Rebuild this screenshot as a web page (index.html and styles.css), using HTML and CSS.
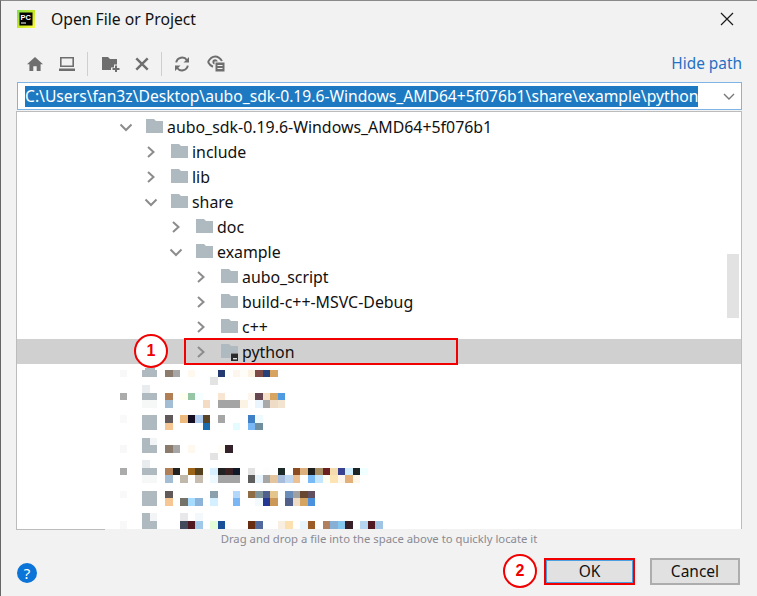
FILE: index.html
```html
<!DOCTYPE html>
<html lang="en">
<head>
<meta charset="utf-8">
<title>Open File or Project</title>
<link rel="stylesheet" href="styles.css">
</head>
<body>
<div class="dialog">
  <header class="titlebar">
    <svg class="logo" width="18" height="18" viewBox="0 0 18 18">
      <defs><linearGradient id="lg" x1="0" y1="0" x2="1" y2="1"><stop offset="0" stop-color="#7ee050"/><stop offset="0.5" stop-color="#c4e620"/><stop offset="1" stop-color="#fcf84a"/></linearGradient></defs>
      <rect width="18" height="18" fill="url(#lg)"/>
      <rect x="2.5" y="2.5" width="13" height="13" fill="#000"/>
      <text x="3.5" y="9.5" class="logo-text">PC</text>
      <rect x="4" y="12.5" width="5" height="1" fill="#fff"/>
    </svg>
    <span class="title">Open File or Project</span>
    <svg class="close" width="14" height="14" viewBox="0 0 14 14"><path d="M1 1L13 13M13 1L1 13" stroke="#1a1a1a" stroke-width="1.2" fill="none"/></svg>
  </header>

  <div class="toolbar">
    <div class="tools">
      <svg class="tool tool-home" width="16" height="14" viewBox="0 0 16 14"><path d="M8 0L16 7.2H13.6V14H9.7V9.3H6.3V14H2.4V7.2H0Z" fill="#6e6e6e"/></svg>
      <svg class="tool tool-pc" width="16" height="14" viewBox="0 0 16 14"><path d="M1 0H15V10H1ZM2.6 1.6V8.4H13.4V1.6ZM0 11.6H16V14H0Z" fill="#6e6e6e" fill-rule="evenodd"/></svg>
      <span class="sep"></span>
      <svg class="tool tool-new" width="18" height="16" viewBox="0 0 18 16"><path d="M0 1H6L8 3H15V8.5H12V11.5H9V14H0Z" fill="#6e6e6e"/><path d="M13 9.5H15V12H17.5V14H15V16H13V14H10.5V12H13Z" fill="#6e6e6e"/></svg>
      <svg class="tool tool-del" width="14" height="14" viewBox="0 0 14 14"><path d="M1.3 1.3L12.7 12.7M12.7 1.3L1.3 12.7" stroke="#6e6e6e" stroke-width="2.4" fill="none"/></svg>
      <span class="sep"></span>
      <svg class="tool tool-ref" width="16" height="16" viewBox="0 0 16 16"><path d="M2.2 6.4A6 6 0 0 1 13 4.2M13.8 9.6A6 6 0 0 1 3 11.8" stroke="#6e6e6e" stroke-width="2" fill="none"/><path d="M15 1V6.5H9.5ZM1 15V9.5H6.5Z" fill="#6e6e6e"/></svg>
      <svg class="tool tool-eye" width="18" height="17" viewBox="0 0 18 17"><path d="M1 7C3 3.2 5.6 1.4 8.2 1.4S13 3 15 6" stroke="#6e6e6e" stroke-width="2" fill="none"/><path d="M1 7C2.4 9.6 4 11 6 11.8" stroke="#6e6e6e" stroke-width="2" fill="none"/><circle cx="8" cy="6.8" r="2.6" fill="#6e6e6e"/><rect x="8" y="7" width="10" height="10" fill="#6e6e6e" stroke="#f2f2f2"/><path d="M10.5 10.5H15.5M10.5 13.5H15.5" stroke="#f2f2f2" stroke-width="1.2"/></svg>
    </div>
    <a class="hide-path">Hide path</a>
  </div>

  <div class="path-field">
    <span class="path-text">C:\Users\fan3z\Desktop\aubo_sdk-0.19.6-Windows_AMD64+5f076b1\share\example\python</span>
    <svg class="path-caret" width="12" height="7" viewBox="0 0 12 7"><path d="M1 1L6 6L11 1" stroke="#777" stroke-width="1.4" fill="none"/></svg>
  </div>

  <div class="tree">
    <div class="row lvl0"><svg class="chev" width="14" height="14" viewBox="0 0 14 14"><use href="#down"/></svg><svg class="folder" width="17" height="14" viewBox="0 0 17 14"><use href="#fold"/></svg><span>aubo_sdk-0.19.6-Windows_AMD64+5f076b1</span></div>
    <div class="row lvl1"><svg class="chev" width="14" height="14" viewBox="0 0 14 14"><use href="#right"/></svg><svg class="folder" width="17" height="14" viewBox="0 0 17 14"><use href="#fold"/></svg><span>include</span></div>
    <div class="row lvl1"><svg class="chev" width="14" height="14" viewBox="0 0 14 14"><use href="#right"/></svg><svg class="folder" width="17" height="14" viewBox="0 0 17 14"><use href="#fold"/></svg><span>lib</span></div>
    <div class="row lvl1"><svg class="chev" width="14" height="14" viewBox="0 0 14 14"><use href="#down"/></svg><svg class="folder" width="17" height="14" viewBox="0 0 17 14"><use href="#fold"/></svg><span>share</span></div>
    <div class="row lvl2"><svg class="chev" width="14" height="14" viewBox="0 0 14 14"><use href="#right"/></svg><svg class="folder" width="17" height="14" viewBox="0 0 17 14"><use href="#fold"/></svg><span>doc</span></div>
    <div class="row lvl2"><svg class="chev" width="14" height="14" viewBox="0 0 14 14"><use href="#down"/></svg><svg class="folder" width="17" height="14" viewBox="0 0 17 14"><use href="#fold"/></svg><span>example</span></div>
    <div class="row lvl3"><svg class="chev" width="14" height="14" viewBox="0 0 14 14"><use href="#right"/></svg><svg class="folder" width="17" height="14" viewBox="0 0 17 14"><use href="#fold"/></svg><span>aubo_script</span></div>
    <div class="row lvl3"><svg class="chev" width="14" height="14" viewBox="0 0 14 14"><use href="#right"/></svg><svg class="folder" width="17" height="14" viewBox="0 0 17 14"><use href="#fold"/></svg><span>build-c++-MSVC-Debug</span></div>
    <div class="row lvl3"><svg class="chev" width="14" height="14" viewBox="0 0 14 14"><use href="#right"/></svg><svg class="folder" width="17" height="14" viewBox="0 0 17 14"><use href="#fold"/></svg><span>c++</span></div>
    <div class="row lvl3 selected"><svg class="chev" width="14" height="14" viewBox="0 0 14 14"><use href="#right"/></svg><svg class="folder" width="17" height="17" viewBox="0 0 17 17"><use href="#fold"/><rect x="9.5" y="9" width="9" height="9" fill="#d0d0d0"/><rect x="10" y="9.5" width="8" height="7.5" fill="#2b2b2b"/><rect x="12" y="14" width="4" height="1.4" fill="#ddd"/></svg><span>python</span></div>

    <div class="scroll-thumb"></div>
    <div class="red-box"></div>
    <div class="badge badge-one">1</div>

    <svg class="mosaic" width="300" height="170" viewBox="0 0 900 510" shape-rendering="crispEdges">
      <g fill="#aeb9c0">
        <rect x="135" y="25" width="30" height="5"/><rect x="127" y="30" width="45" height="22"/>
        <rect x="127" y="98" width="45" height="22"/>
        <rect x="127" y="165" width="45" height="45"/>
        <rect x="127" y="233" width="23" height="22"/><rect x="127" y="255" width="45" height="23"/>
        <rect x="127" y="323" width="45" height="23"/>
        <rect x="127" y="392" width="45" height="45"/>
        <rect x="127" y="460" width="23" height="23"/><rect x="127" y="483" width="45" height="27"/>
      </g>
      <g id="m1">
        <rect x="60" y="30" width="22" height="22" fill="#f8f8f8"/><rect x="195" y="30" width="23" height="22" fill="#8a7b6c"/><rect x="218" y="30" width="22" height="22" fill="#a6a6a6"/><rect x="263" y="30" width="22" height="22" fill="#fff8ee"/><rect x="353" y="30" width="23" height="22" fill="#253a72"/><rect x="398" y="30" width="22" height="22" fill="#fdf6ef"/><rect x="420" y="30" width="23" height="22" fill="#fffdf8"/><rect x="443" y="30" width="23" height="22" fill="#fdf1e2"/><rect x="466" y="30" width="22" height="22" fill="#7f4a45"/><rect x="488" y="30" width="23" height="22" fill="#27407a"/><rect x="511" y="30" width="22" height="22" fill="#d7a35f"/><rect x="330" y="52" width="23" height="23" fill="#e3e3e3"/>
        <rect x="127" y="75" width="23" height="23" fill="#e8ecee"/>
        <rect x="60" y="98" width="22" height="22" fill="#ababab"/><rect x="195" y="98" width="23" height="22" fill="#b07f56"/><rect x="240" y="98" width="23" height="22" fill="#fffff0"/><rect x="263" y="98" width="22" height="22" fill="#97c6a6"/><rect x="285" y="98" width="23" height="22" fill="#f6ffff"/><rect x="353" y="98" width="23" height="22" fill="#f8e6d2"/><rect x="443" y="98" width="23" height="22" fill="#fef6ec"/><rect x="466" y="98" width="22" height="22" fill="#664650"/><rect x="488" y="98" width="23" height="22" fill="#f4e0c8"/><rect x="511" y="98" width="22" height="22" fill="#d7a560"/><rect x="533" y="98" width="23" height="22" fill="#4f9ae0"/>
        <rect x="127" y="120" width="45" height="23" fill="#f6f8f8"/><rect x="195" y="120" width="23" height="23" fill="#a3bdd4"/><rect x="308" y="120" width="22" height="23" fill="#f4dcc4"/><rect x="353" y="120" width="67" height="23" fill="#a4a4a4"/><rect x="420" y="120" width="23" height="23" fill="#fcf3e5"/><rect x="466" y="120" width="22" height="23" fill="#eaf4fc"/><rect x="488" y="120" width="23" height="23" fill="#a9a9a9"/><rect x="511" y="120" width="22" height="23" fill="#eedcc6"/><rect x="533" y="120" width="23" height="23" fill="#f3e4d0"/>
      </g>
      <g id="m2">
        <rect x="60" y="165" width="22" height="23" fill="#f9f9f9"/><rect x="195" y="165" width="23" height="23" fill="#625a5a"/><rect x="240" y="165" width="23" height="23" fill="#ecb87c"/><rect x="263" y="165" width="22" height="23" fill="#150e22"/><rect x="285" y="165" width="23" height="23" fill="#afcdf0"/><rect x="308" y="165" width="22" height="23" fill="#5a4428"/><rect x="353" y="165" width="23" height="23" fill="#a6a6a6"/><rect x="443" y="165" width="23" height="23" fill="#3f7fc6"/><rect x="466" y="165" width="22" height="23" fill="#effaff"/>
        <rect x="195" y="188" width="23" height="22" fill="#f6c793"/><rect x="308" y="188" width="22" height="22" fill="#1a6cae"/><rect x="398" y="188" width="22" height="22" fill="#e4fcff"/><rect x="443" y="188" width="23" height="22" fill="#78b6f6"/><rect x="466" y="188" width="22" height="22" fill="#6f8ea0"/>
        <rect x="150" y="233" width="22" height="22" fill="#f3f4f5"/>
        <rect x="60" y="255" width="22" height="23" fill="#f8f8f8"/><rect x="195" y="255" width="23" height="23" fill="#8a7b6c"/><rect x="218" y="255" width="22" height="23" fill="#a6a6a6"/><rect x="263" y="255" width="22" height="23" fill="#fff8ee"/><rect x="353" y="255" width="23" height="23" fill="#fffdf5"/><rect x="376" y="255" width="22" height="23" fill="#33222a"/><rect x="330" y="278" width="23" height="22" fill="#e3e3e3"/>
      </g>
      <g id="m3">
        <rect x="127" y="300" width="23" height="23" fill="#e8ecee"/>
        <rect x="60" y="323" width="22" height="23" fill="#ababab"/><rect x="195" y="323" width="23" height="23" fill="#b07f56"/><rect x="218" y="323" width="22" height="23" fill="#222222"/><rect x="263" y="323" width="22" height="23" fill="#9c6418"/><rect x="285" y="323" width="23" height="23" fill="#54401c"/><rect x="330" y="323" width="23" height="23" fill="#d8efff"/><rect x="353" y="323" width="23" height="23" fill="#222222"/><rect x="376" y="323" width="22" height="23" fill="#3a2020"/><rect x="398" y="323" width="22" height="23" fill="#101a28"/><rect x="443" y="323" width="23" height="23" fill="#e2e2e2"/><rect x="488" y="323" width="23" height="23" fill="#fdfdfd"/><rect x="533" y="323" width="23" height="23" fill="#1e2a28"/><rect x="578" y="323" width="23" height="23" fill="#8a4c20"/><rect x="601" y="323" width="22" height="23" fill="#dbb07c"/><rect x="623" y="323" width="23" height="23" fill="#1e1e1e"/><rect x="646" y="323" width="22" height="23" fill="#a89064"/><rect x="668" y="323" width="23" height="23" fill="#6a2020"/><rect x="691" y="323" width="22" height="23" fill="#f4dcae"/><rect x="713" y="323" width="23" height="23" fill="#384090"/><rect x="736" y="323" width="22" height="23" fill="#cfeeff"/><rect x="758" y="323" width="23" height="23" fill="#1e2426"/><rect x="781" y="323" width="22" height="23" fill="#f0ffff"/>
        <rect x="127" y="346" width="45" height="22" fill="#f6f8f8"/><rect x="195" y="346" width="23" height="22" fill="#a3bdd4"/><rect x="240" y="346" width="23" height="22" fill="#c0b8aa"/><rect x="285" y="346" width="23" height="22" fill="#c6bcb0"/><rect x="330" y="346" width="23" height="22" fill="#eef8ff"/><rect x="353" y="346" width="67" height="22" fill="#a4a4a4"/><rect x="443" y="346" width="23" height="22" fill="#5e5e5e"/><rect x="466" y="346" width="22" height="22" fill="#e8f4fc"/><rect x="488" y="346" width="23" height="22" fill="#a6a6a6"/><rect x="511" y="346" width="22" height="22" fill="#e4c49c"/><rect x="533" y="346" width="23" height="22" fill="#a8bcdc"/><rect x="556" y="346" width="22" height="22" fill="#c0d8f0"/><rect x="578" y="346" width="23" height="22" fill="#ecc090"/><rect x="623" y="346" width="23" height="22" fill="#78baf8"/><rect x="646" y="346" width="22" height="22" fill="#c4e6ff"/><rect x="668" y="346" width="23" height="22" fill="#fffef2"/><rect x="691" y="346" width="22" height="22" fill="#fde4b4"/><rect x="713" y="346" width="23" height="22" fill="#fff6ec"/><rect x="736" y="346" width="22" height="22" fill="#e2b078"/><rect x="758" y="346" width="23" height="22" fill="#fff6ea"/>
      </g>
      <g id="m4">
        <rect x="60" y="392" width="22" height="23" fill="#f9f9f9"/><rect x="195" y="392" width="23" height="23" fill="#625a5a"/><rect x="330" y="392" width="23" height="23" fill="#8aa0ac"/><rect x="398" y="392" width="22" height="23" fill="#b4d8fc"/><rect x="443" y="392" width="23" height="23" fill="#8e6c44"/><rect x="466" y="392" width="22" height="23" fill="#80949c"/><rect x="488" y="392" width="23" height="23" fill="#50608e"/><rect x="511" y="392" width="22" height="23" fill="#e4c68c"/><rect x="556" y="392" width="22" height="23" fill="#6a8cb8"/><rect x="578" y="392" width="23" height="23" fill="#a0a0a0"/><rect x="601" y="392" width="22" height="23" fill="#684830"/><rect x="623" y="392" width="23" height="23" fill="#625060"/>
        <rect x="195" y="415" width="23" height="22" fill="#f6c793"/><rect x="240" y="415" width="23" height="22" fill="#73736a"/><rect x="263" y="415" width="22" height="22" fill="#a6dcff"/><rect x="285" y="415" width="23" height="22" fill="#8cb4d8"/><rect x="330" y="415" width="23" height="22" fill="#d4efff"/><rect x="398" y="415" width="22" height="22" fill="#78b6f6"/><rect x="466" y="415" width="22" height="22" fill="#f2fafe"/><rect x="488" y="415" width="23" height="22" fill="#233894"/><rect x="511" y="415" width="22" height="22" fill="#cc9858"/><rect x="556" y="415" width="22" height="22" fill="#50608a"/><rect x="578" y="415" width="23" height="22" fill="#eedcc6"/><rect x="601" y="415" width="22" height="22" fill="#d4a460"/><rect x="623" y="415" width="23" height="22" fill="#4a90dc"/>
      </g>
      <g id="m5">
        <rect x="150" y="460" width="22" height="23" fill="#f3f4f5"/><rect x="240" y="460" width="23" height="23" fill="#e8e8ea"/><rect x="285" y="460" width="23" height="23" fill="#f3f8fc"/>
        <rect x="60" y="483" width="22" height="27" fill="#f8f8f8"/><rect x="240" y="483" width="23" height="27" fill="#434a5c"/><rect x="263" y="483" width="22" height="27" fill="#521820"/><rect x="285" y="483" width="23" height="27" fill="#a0c8e8"/><rect x="330" y="483" width="23" height="27" fill="#e4fcd8"/><rect x="353" y="483" width="23" height="27" fill="#1a5098"/><rect x="443" y="483" width="23" height="27" fill="#682c10"/><rect x="466" y="483" width="22" height="27" fill="#50689c"/><rect x="533" y="483" width="23" height="27" fill="#f8eee2"/><rect x="556" y="483" width="22" height="27" fill="#fde0b0"/><rect x="601" y="483" width="22" height="27" fill="#e8f4fc"/><rect x="623" y="483" width="23" height="27" fill="#9c5c28"/><rect x="668" y="483" width="23" height="27" fill="#b08060"/><rect x="691" y="483" width="22" height="27" fill="#88b0d4"/><rect x="713" y="483" width="23" height="27" fill="#84c8f0"/><rect x="736" y="483" width="22" height="27" fill="#382028"/><rect x="781" y="483" width="22" height="27" fill="#b4d4f0"/><rect x="803" y="483" width="23" height="27" fill="#501820"/><rect x="826" y="483" width="23" height="27" fill="#a0c4e4"/>
      </g>
    </svg>
  </div>

  <p class="hint">Drag and drop a file into the space above to quickly locate it</p>

  <footer class="footer">
    <div class="help">?</div>
    <div class="actions">
      <div class="badge badge-two">2</div>
      <button class="btn btn-ok">OK</button>
      <button class="btn">Cancel</button>
    </div>
  </footer>
</div>

<svg class="defs" width="0" height="0">
  <defs>
    <path id="fold" d="M0 0H8L10 2H17V14H0Z" fill="#aeb9c0"/>
    <path id="right" d="M4 2L9.5 7L4 12" stroke="#8c8c8c" stroke-width="2" fill="none"/>
    <path id="down" d="M1.5 4.5L7 10L12.5 4.5" stroke="#8c8c8c" stroke-width="2" fill="none"/>
  </defs>
</svg>
</body>
</html>
```

FILE: styles.css
```css
* { box-sizing: border-box; }
html, body { margin: 0; padding: 0; }
body {
  width: 757px;
  height: 596px;
  overflow: hidden;
  background: #f2f2f2;
  font-family: "Noto Sans", "Open Sans", sans-serif;
  color: #111;
}
.defs { position: absolute; }
.dialog {
  width: 757px;
  height: 596px;
  display: flex;
  flex-direction: column;
  border-top: 1px solid #8a8a8a;
  border-left: 1px solid #666;
  position: relative;
}
.titlebar {
  height: 39px;
  display: flex;
  align-items: center;
  padding: 0 23px 3px 16px;
}
.logo-text { font: 700 7.5px "Liberation Sans", sans-serif; fill: #fff; }
.title { margin-left: 16px; font-size: 15.7px; flex: 1; line-height: 18px; }
.toolbar {
  height: 42px;
  display: flex;
  align-items: center;
  padding: 5px 15px 0 26px;
  justify-content: space-between;
}
.tools { display: flex; align-items: center; }
.tool { display: block; flex: none; }
.tool-pc { margin-left: 16px; }
.sep { width: 1px; height: 24px; background: #cfcfcf; margin: 0 12px; }
.tool-new { margin-left: 2px; }
.tool-del { margin-left: 15px; }
.tool-eye { margin-left: 17px; }
.hide-path { color: #2470c4; font-size: 15.4px; position: relative; top: 0; }
.path-field {
  height: 28px;
  margin: 0 15px 0 16px;
  background: #fff;
  border: 1px solid #7fb4e6;
  display: flex;
  align-items: center;
  justify-content: space-between;
  padding: 0 6px 0 7px;
  flex: none;
}
.path-text {
  background: #1d7ac2;
  color: #fff;
  font-size: 15.67px;
  line-height: 21px;
  white-space: nowrap;
}
.tree {
  position: relative;
  height: 419px;
  margin: 1px 15px 0 15px;
  padding-top: 2px;
  background: #fff;
  border: 1px solid #bcbcbc;
  flex: none;
}
.tree::after {
  content: "";
  position: absolute;
  left: 88px;
  right: -1px;
  bottom: -1px;
  height: 1px;
  background: #f2f2f2;
}
.row {
  height: 25px;
  display: flex;
  align-items: center;
  font-size: 15.9px;
  white-space: nowrap;
}
.lvl0 { padding-left: 102px; }
.lvl1 { padding-left: 127px; }
.lvl2 { padding-left: 152px; }
.lvl3 { padding-left: 177px; }
.selected { background: #d0d0d0; }
.chev { flex: none; }
.folder { flex: none; margin-left: 13px; margin-right: 4px; position: relative; top: -1px; }
.selected .folder { top: 1px; }
.scroll-thumb {
  position: absolute;
  left: 710px;
  top: 142px;
  width: 12px;
  height: 64px;
  background: #e2e2e2;
}
.red-box {
  position: absolute;
  left: 167px;
  top: 226px;
  width: 274px;
  height: 27px;
  border: 2px solid #f00000;
}
.badge {
  width: 34px;
  height: 34px;
  border-radius: 50%;
  background: #fff;
  border: 2px solid #f00000;
  color: #f00000;
  font: 700 16px/30px "Liberation Sans", sans-serif;
  text-align: center;
}
.badge-one { position: absolute; left: 117px; top: 222px; }
.mosaic { position: absolute; left: 83px; top: 248px; }
.hint {
  margin: 0;
  height: 17px;
  text-align: center;
  font-size: 11.3px;
  line-height: 17px;
  color: #8a8a92;
  flex: none;
}
.footer {
  flex: 1;
  display: flex;
  align-items: flex-start;
  justify-content: space-between;
  padding: 0 17px 0 16px;
}
.help {
  width: 20px;
  height: 20px;
  margin-top: 16px;
  border-radius: 50%;
  background: #0a74d8;
  color: #fff;
  font: 400 15px/20px "Noto Sans", sans-serif;
  text-align: center;
}
.actions { display: flex; align-items: center; margin-top: 7px; }
.btn {
  width: 90px;
  height: 27px;
  background: #e1e1e1;
  border: 2px solid #adadad;
  font: 400 15.5px/20px "Noto Sans", sans-serif;
  color: #111;
  padding: 0;
  margin-left: 15px;
}
.btn-ok {
  width: 91px;
  margin-left: 7px;
  border-color: #f00000;
  box-shadow: inset 0 0 0 1px #4aa0e0;
}
```
